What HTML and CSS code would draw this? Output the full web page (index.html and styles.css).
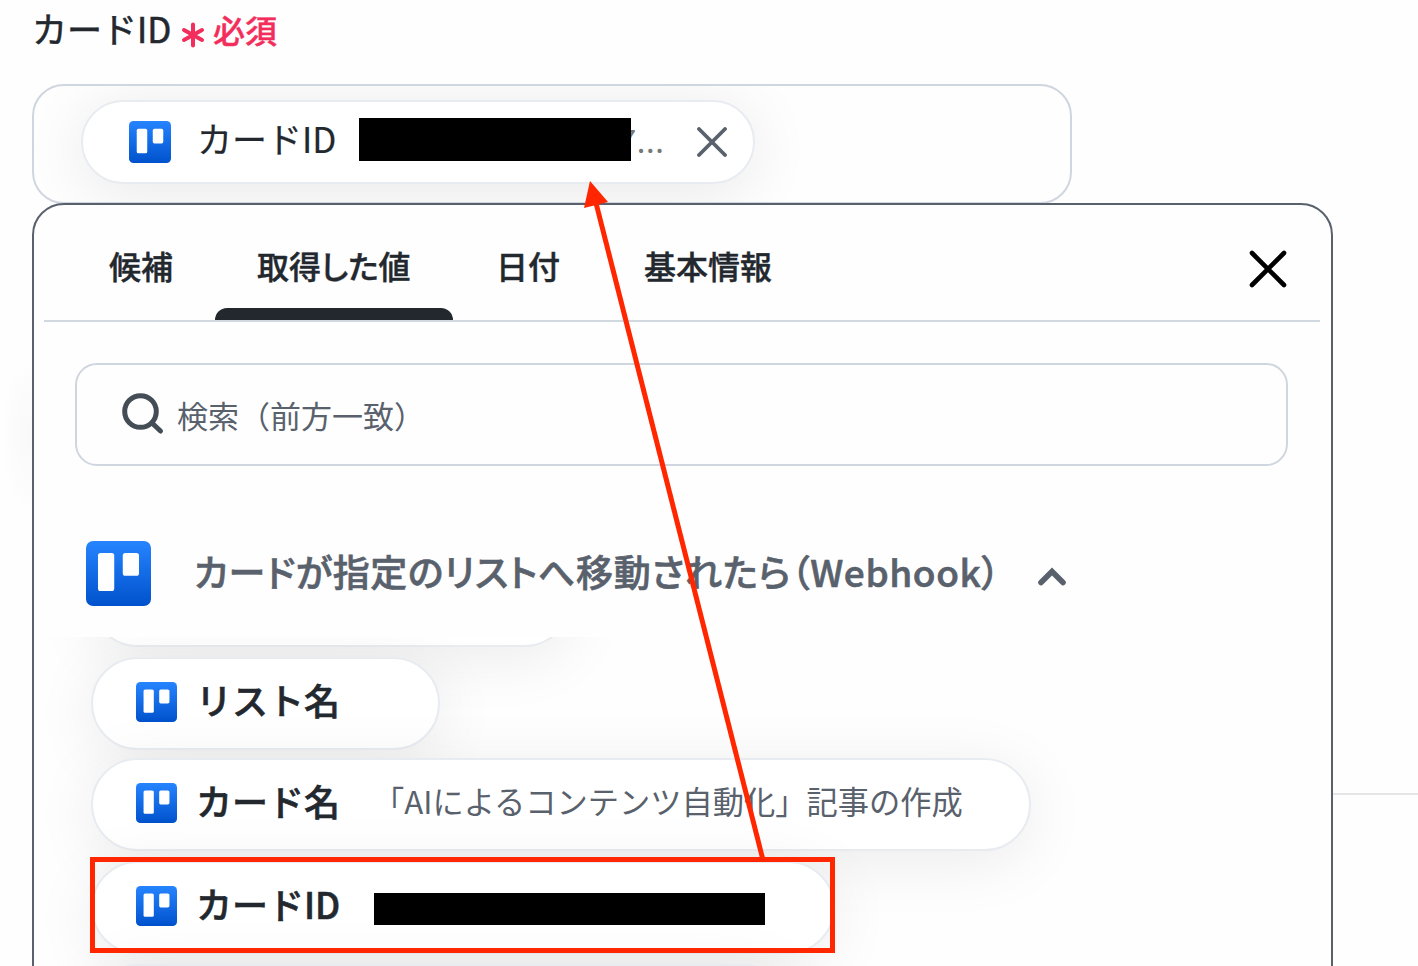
FILE: index.html
```html
<!DOCTYPE html>
<html lang="ja">
<head>
  <meta charset="UTF-8">
  <meta name="viewport" content="width=device-width, initial-scale=1.0">
  <title>カードID</title>
  <link rel="stylesheet" href="styles.css">
</head>
<body>
  <!-- Trello アイコン -->
  <svg class="defs" width="0" height="0">
    <defs>
      <linearGradient id="blue" x1="0" y1="0" x2="0" y2="1">
        <stop offset="0" stop-color="#2684ff"/>
        <stop offset="1" stop-color="#0052cc"/>
      </linearGradient>
      <symbol id="trello" viewBox="0 0 64 64" preserveAspectRatio="none">
        <rect width="64" height="64" rx="7" fill="url(#blue)"/>
        <rect x="11.8" y="11.8" width="16" height="37.5" rx="2.5" fill="#fff"/>
        <rect x="36.2" y="11.8" width="16" height="22.4" rx="2.5" fill="#fff"/>
      </symbol>
    </defs>
  </svg>

  <div class="page">
    <div class="label">
      <span class="label-text">カードID</span>
      <svg class="asterisk" width="24" height="26" viewBox="0 0 24 26"><path d="M12 2.5v21M3 8l18 10M21 8L3 18"/></svg>
      <span class="required">必須</span>
    </div>

    <div class="field">
      <div class="tag">
        <svg class="tag-icon"><use href="#trello"/></svg>
        <span class="tag-name">カードID</span>
        <span class="mask"></span>
        <span class="tag-rest">7...</span>
        <svg class="tag-close" width="30" height="30" viewBox="0 0 30 30"><path d="M2 2l26 26M28 2L2 28"/></svg>
      </div>
    </div>

    <div class="panel">
      <div class="tabs">
        <div class="tab">候補</div>
        <div class="tab active">取得した値</div>
        <div class="tab">日付</div>
        <div class="tab">基本情報</div>
        <svg class="close" width="38" height="38" viewBox="0 0 38 38"><path d="M3 3l32 32M35 3L3 35"/></svg>
      </div>

      <div class="search">
        <svg width="44" height="44" viewBox="0 0 44 44"><circle cx="19.5" cy="19.5" r="15.8"/><path d="M31.5 31.5L39.5 39"/></svg>
        <span>検索（前方一致）</span>
      </div>

      <div class="group">
        <svg class="group-icon"><use href="#trello"/></svg>
        <span class="group-title">カードが指定のリストへ移動されたら（Webhook）</span>
        <svg class="chevron" width="30" height="20" viewBox="0 0 30 20"><path d="M4 15.5L15 4.5l11 11"/></svg>
      </div>

      <div class="list">
        <div class="item item-prev"></div>
        <div class="item item-list">
          <svg class="item-icon"><use href="#trello"/></svg>
          <span class="item-name">リスト名</span>
        </div>
        <div class="item item-card">
          <svg class="item-icon"><use href="#trello"/></svg>
          <span class="item-name">カード名</span>
          <span class="item-value">「AIによるコンテンツ自動化」記事の作成</span>
        </div>
        <div class="item item-id">
          <svg class="item-icon"><use href="#trello"/></svg>
          <span class="item-name">カードID</span>
          <span class="mask mask-id"></span>
        </div>
        <div class="item item-next"></div>
      </div>
    </div>
  </div>

  <div class="side-line"></div>
  <div class="side-shadow"></div>

  <!-- 注釈 -->
  <div class="highlight"></div>
  <svg class="arrow" width="1418" height="966" viewBox="0 0 1418 966">
    <path class="shaft" d="M762.5 858L596 203"/>
    <path class="head" d="M590 181l18 21-24 6z"/>
  </svg>
</body>
</html>
```

FILE: styles.css
```css
* {
  box-sizing: border-box;
}
body {
  margin: 0;
  height: 966px;
  position: relative;
  overflow: hidden;
  background: #fefefe;
  color: #23282f;
  font-family: "Noto Sans CJK JP", sans-serif;
}
svg {
  display: block;
  flex: none;
}
path, circle {
  fill: none;
  stroke-linecap: round;
}
.defs {
  position: absolute;
}
.page {
  padding-left: 32px;
}
.label {
  display: flex;
  height: 84px;
  line-height: 56px;
  white-space: nowrap;
}
.label-text {
  width: 149px;
  font-size: 35px;
  -webkit-text-stroke: 0.6px;
}
.asterisk {
  margin-top: 22px;
}
.asterisk path {
  stroke: #f32e5c;
  stroke-width: 4;
}
.required {
  margin-left: 8px;
  font-size: 32px;
  font-weight: 500;
  line-height: 58px;
  color: #f32e5c;
  -webkit-text-stroke: 0.4px;
}
.field {
  width: 1040px;
  height: 120px;
  padding: 14px 0 0 47px;
  border: 2px solid #d0d6df;
  border-radius: 32px;
  overflow: hidden;
}
.tag {
  display: flex;
  align-items: center;
  width: 674px;
  height: 84px;
  padding-left: 46px;
  border: 2px solid #e8ecf1;
  border-radius: 42px;
  background: #fff;
  box-shadow: 0 8px 64px rgba(0, 0, 0, 0.09);
}
.tag-icon {
  width: 42px;
  height: 42px;
}
.tag-name {
  width: 162px;
  margin: -9px 0 0 26px;
  font-size: 35px;
  white-space: nowrap;
  -webkit-text-stroke: 0.2px;
}
.mask {
  position: relative;
  width: 272px;
  height: 43px;
  margin-top: -5px;
  background: #000;
}
.tag-rest {
  width: 78px;
  margin: -5px 0 0 -12px;
  font-size: 31px;
  color: #777;
  letter-spacing: 0.6px;
}
.tag-close path {
  stroke: #59616c;
  stroke-width: 3.8;
}
.panel {
  position: relative;
  width: 1301px;
  height: 800px;
  margin-top: -1px;
  border: 2px solid #59616c;
  border-radius: 32px;
  background: #fefefe;
}
.tabs {
  display: flex;
  align-items: flex-start;
  height: 117px;
  margin: 0 11px 0 10px;
  padding-left: 23px;
  border-bottom: 2px solid #d2d8df;
}
.tab {
  height: 115px;
  padding: 0 42px;
  font-size: 32px;
  font-weight: 500;
  line-height: 121px;
  white-space: nowrap;
  font-feature-settings: "palt";
  -webkit-text-stroke: 0.4px;
}
.active {
  width: 239px;
}
.active::after {
  content: "";
  display: block;
  width: 238px;
  height: 12px;
  margin: -18px 0 0 -42px;
  border-radius: 12px 12px 0 0;
  background: #23282f;
}
.close {
  margin: 45px 33px 0 auto;
}
.close path {
  stroke: #000;
  stroke-width: 4.6;
}
.search {
  display: flex;
  align-items: center;
  width: 1213px;
  height: 103px;
  margin: 41px 0 0 41px;
  padding-left: 44px;
  border: 2px solid #d0d6df;
  border-radius: 22px;
  font-size: 31px;
  color: #59616c;
}
.search svg {
  margin-top: -2px;
}
.search span {
  margin: -1px 0 0 12px;
}
.search path, .search circle {
  stroke: #444c55;
  stroke-width: 5;
}
.group {
  display: flex;
  align-items: center;
  height: 171px;
  padding: 43px 0 0 52px;
}
.group-icon {
  width: 65px;
  height: 65px;
}
.group-title {
  width: 843px;
  margin: -4px 0 0 43px;
  font-size: 37px;
  font-weight: 500;
  font-feature-settings: "palt";
  letter-spacing: 0.6px;
  white-space: nowrap;
  color: #59616c;
  -webkit-text-stroke: 0.6px;
}
.chevron {
  margin-top: 7px;
}
.chevron path {
  stroke: #59616c;
  stroke-width: 5.6;
}
.list {
  display: flex;
  flex-direction: column;
  gap: 10px;
  height: 329px;
  padding-left: 57px;
  overflow: hidden;
}
.item {
  display: flex;
  flex: none;
  align-items: center;
  height: 93px;
  padding-left: 43px;
  border: 2px solid #e8ecf1;
  border-radius: 47px;
  background: #fff;
  box-shadow: 0 10px 64px rgba(0, 0, 0, 0.08);
}
.item-prev {
  width: 480px;
  margin-top: -83px;
}
.item-list {
  width: 349px;
}
.item-card {
  width: 940px;
  margin-top: -2px;
}
.item-id {
  width: 744px;
}
.item-next {
  width: 700px;
}
.item-icon {
  width: 41px;
  height: 40px;
  margin-top: -4px;
}
.item-name {
  width: 178px;
  margin: -9px 0 0 19px;
  font-size: 36px;
  font-weight: 500;
  white-space: nowrap;
  -webkit-text-stroke: 0.6px;
}
.item-value {
  margin: -8px 0 0 -1px;
  font-size: 31.25px;
  color: #59616c;
  white-space: nowrap;
}
.mask-id {
  width: 391px;
  height: 32px;
  margin-top: 2px;
}
.side-line {
  position: absolute;
  left: 1333px;
  right: 0;
  top: 793px;
  height: 2px;
  background: #e4e6e8;
}
.side-shadow {
  position: absolute;
  left: 0;
  top: 350px;
  width: 32px;
  height: 170px;
  background: radial-gradient(ellipse 32px 80px at 32px 85px, rgba(60, 75, 70, 0.03), transparent);
}
.highlight {
  position: absolute;
  left: 90px;
  top: 857px;
  width: 745px;
  height: 96px;
  border: 5px solid #ff2600;
}
.arrow {
  position: absolute;
  left: 0;
  top: 0;
}
.shaft {
  stroke: #ff2600;
  stroke-width: 5;
  stroke-linecap: butt;
}
.head {
  fill: #ff2600;
}
```
